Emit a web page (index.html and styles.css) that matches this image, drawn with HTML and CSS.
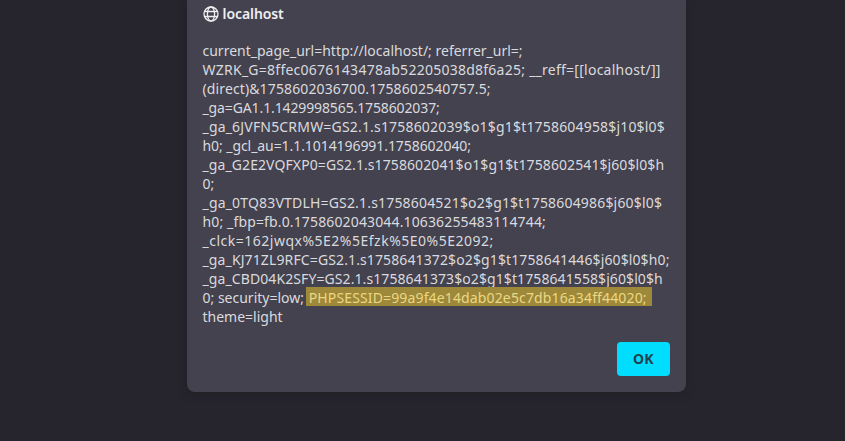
FILE: index.html
```html
<!DOCTYPE html>
<html lang="en">
<head>
<meta charset="utf-8">
<title>localhost</title>
<link rel="stylesheet" href="styles.css">
</head>
<body>
<main class="dialog" role="alertdialog">
<header class="dialog-header">
<svg class="globe" viewBox="0 0 16 16" fill="none" stroke="currentColor" stroke-width="1.3"><circle cx="8" cy="8" r="7"/><ellipse cx="8" cy="8" rx="3.6" ry="7"/><path d="M1.5 5.5h13M1.5 10.5h13"/></svg>
<span class="origin">localhost</span>
</header>
<div class="message">
<div>current_page_url=http://localhost/; referrer_url=;</div>
<div class="track-5">WZRK_G=8ffec0676143478ab52205038d8f6a25; __reff=[[localhost/]]</div>
<div class="track-2">(direct)&amp;1758602036700.1758602540757.5;</div>
<div class="tight-2">_ga=GA1.1.1429998565.1758602037;</div>
<div class="track-4">_ga_6JVFN5CRMW=GS2.1.s1758602039$o1$g1$t1758604958$j10$l0$</div>
<div class="tight-1">h0; _gcl_au=1.1.1014196991.1758602040;</div>
<div class="track-1">_ga_G2E2VQFXP0=GS2.1.s1758602041$o1$g1$t1758602541$j60$l0$h</div>
<div>0;</div>
<div class="track-4">_ga_0TQ83VTDLH=GS2.1.s1758604521$o2$g1$t1758604986$j60$l0$</div>
<div class="track-3">h0; _fbp=fb.0.1758602043044.10636255483114744;</div>
<div class="track-6">_clck=162jwqx%5E2%5Efzk%5E0%5E2092;</div>
<div class="track-2">_ga_KJ71ZL9RFC=GS2.1.s1758641372$o2$g1$t1758641446$j60$l0$h0;</div>
<div class="track-1">_ga_CBD04K2SFY=GS2.1.s1758641373$o2$g1$t1758641558$j60$l0$h</div>
<div>0; security=low; <mark class="track-3">PHPSESSID=99a9f4e14dab02e5c7db16a34ff44020;</mark></div>
<div>theme=light</div>
</div>
<footer class="actions"><button class="ok">OK</button></footer>
</main>
</body>
</html>
```

FILE: styles.css
```css
* { box-sizing: border-box; }
body {
  margin: 0;
  height: 441px;
  overflow: hidden;
  background: #26242d;
  font-family: "Noto Sans", sans-serif;
  color: #dadade;
}
.dialog {
  width: 499px;
  height: 392px;
  margin-left: 186.5px;
  padding: 4px 16px 16px;
  background: #44424e;
  border-radius: 0 0 8px 8px;
  box-shadow: 0 2px 8px rgba(32, 32, 32, .6);
}
.dialog-header {
  display: flex;
  align-items: center;
  gap: 4px;
  height: 20px;
  font-size: 14px;
  font-weight: 600;
  color: #efeff2;
}
.globe { width: 16px; height: 16px; }
.origin { margin-top: -1px; letter-spacing: -.08px; }
.message {
  margin-top: 17px;
  font-size: 14px;
  line-height: 19px;
  white-space: nowrap;
}
/* Line tracking */
.tight-2 { letter-spacing: -.12px; }
.tight-1 { letter-spacing: -.07px; }
.track-1 { letter-spacing: .09px; }
.track-2 { letter-spacing: .12px; }
.track-3 { letter-spacing: .14px; }
.track-4 { letter-spacing: .18px; }
.track-5 { letter-spacing: .25px; }
.track-6 { letter-spacing: .5px; }
mark {
  position: relative;
  z-index: 0;
  margin-left: 1px;
  color: #ead884;
  background: none;
}
mark::before {
  content: "";
  position: absolute;
  z-index: -1;
  inset: -1px -5px 1px -3px;
  background: #9e883a;
}
.actions {
  display: flex;
  justify-content: flex-end;
  margin-top: 16px;
}
.ok {
  width: 52.5px;
  height: 34px;
  padding: 0 0 1px;
  border: 0;
  border-radius: 4px;
  background: #00ddff;
  color: #20424f;
  font: 700 14px "Noto Sans", sans-serif;
}
```
